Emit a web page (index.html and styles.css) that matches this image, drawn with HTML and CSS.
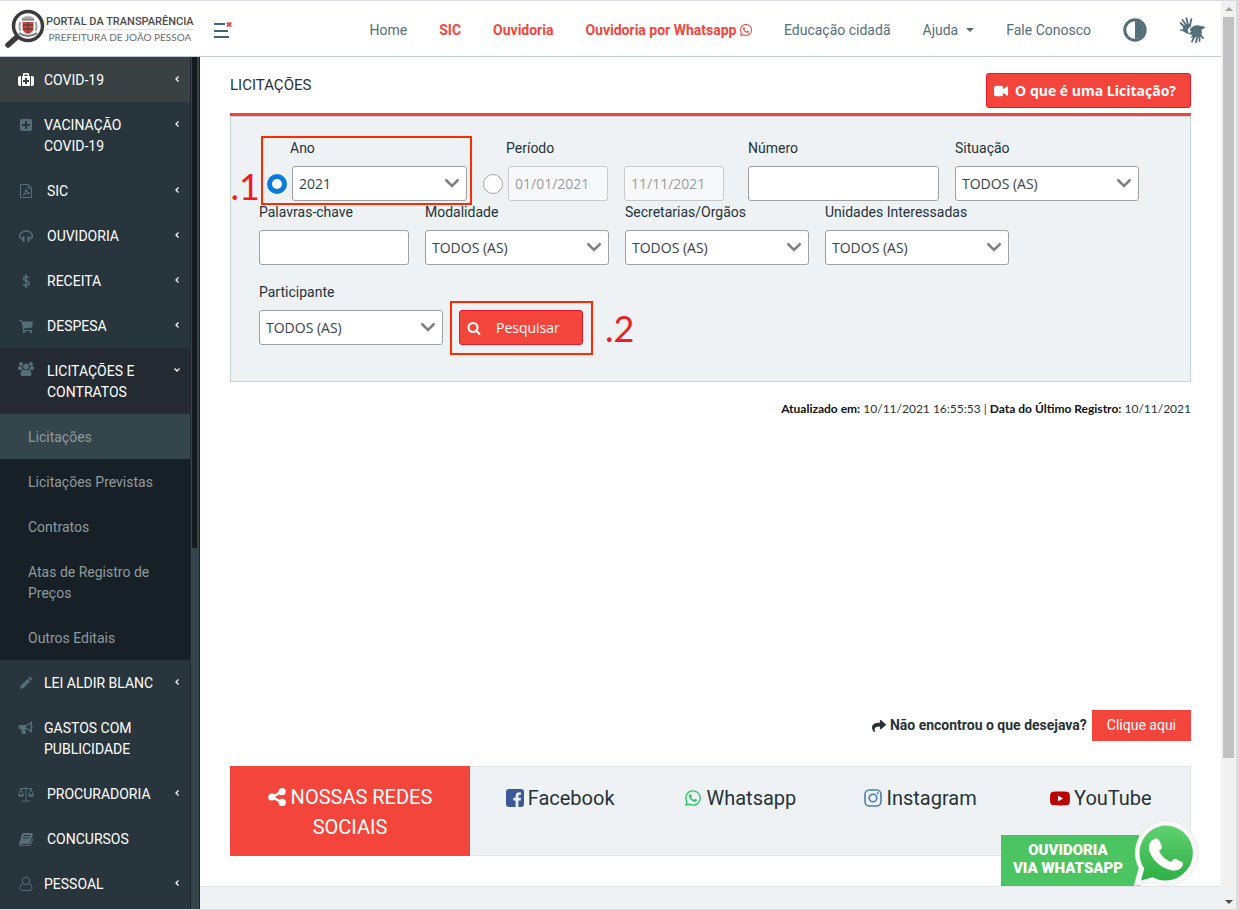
FILE: index.html
```html
<!DOCTYPE html>
<html lang="pt-BR">
<head>
<meta charset="utf-8">
<meta name="viewport" content="width=device-width, initial-scale=1">
<title>Portal da Transparência - Licitações</title>
<link rel="stylesheet" href="styles.css">
</head>
<body>
<svg class="sprite" aria-hidden="true">
  <symbol id="whatsapp" viewBox="0 0 448 512"><path d="M380.9 97.1C339 55.1 283.2 32 223.9 32c-122.4 0-222 99.6-222 222 0 39.1 10.2 77.3 29.6 111L0 480l117.7-30.9c32.4 17.7 68.9 27 106.1 27h.1c122.3 0 224.1-99.6 224.1-222 0-59.3-25.2-115-67.1-157zm-157 341.6c-33.2 0-65.7-8.9-94-25.7l-6.7-4-69.8 18.3L72 359.2l-4.4-7c-18.5-29.4-28.2-63.3-28.2-98.2 0-101.7 82.8-184.5 184.6-184.5 49.3 0 95.6 19.2 130.4 54.1 34.8 34.9 56.2 81.2 56.1 130.5 0 101.8-84.9 184.6-186.6 184.6zm101.2-138.2c-5.5-2.8-32.8-16.2-37.9-18-5.1-1.9-8.8-2.8-12.5 2.8-3.7 5.6-14.3 18-17.6 21.8-3.2 3.7-6.5 4.2-12 1.4-32.6-16.3-54-29.1-75.5-66-5.7-9.8 5.7-9.1 16.3-30.3 1.8-3.7.9-6.9-.5-9.7-1.4-2.8-12.5-30.1-17.1-41.2-4.5-10.8-9.1-9.3-12.5-9.5-3.2-.2-6.9-.2-10.6-.2-3.7 0-9.7 1.4-14.8 6.9-5.1 5.6-19.4 19-19.4 46.3 0 27.3 19.9 53.7 22.6 57.4 2.8 3.7 39.1 59.7 94.8 83.8 35.2 15.2 49 16.5 66.6 13.9 10.7-1.6 32.8-13.4 37.4-26.4 4.6-13 4.6-24.1 3.2-26.4-1.3-2.5-5-3.9-10.5-6.6z"/></symbol>
  <symbol id="chevron" viewBox="0 0 16 10"><path d="M1.500 1.500 8 8l6.500-6.500" fill="none" stroke="currentColor" stroke-width="2.500"/></symbol>
  <symbol id="arrow-left" viewBox="0 0 6 8"><path d="M4.500 1.500 2 4l2.500 2.500" fill="none" stroke="currentColor" stroke-width="1.300"/></symbol>
</svg>

<div class="app">
  <header class="topbar">
    <a class="brand" href="#">
      <svg class="brand-mark" viewBox="0 0 42 42" aria-hidden="true">
        <path d="M13 28 4 36" stroke="#3b3b3d" stroke-width="5.500" stroke-linecap="round"/>
        <circle cx="24" cy="17" r="14.500" fill="#fff" stroke="#3b3b3d" stroke-width="3.500"/>
        <path d="M18 11V8l2 1 1-2h1l1 1 1-2 1 2 1-1h1l1 2 2-1v3z" fill="#a5a5a7"/>
        <path d="M18 11h12" stroke="#777" stroke-width="1.200"/>
        <path d="M18.500 13h11v7q-1 4-5.500 5-4.500-1-5.500-5z" fill="#d9403b"/>
        <path d="M24 13v11M19 16h10M19 20h10" stroke="#4a4a4a" stroke-width="1.300"/>
        <path d="M16.500 13q-2 4 0 9M31.500 13q2 4 0 9" fill="none" stroke="#999" stroke-width="1.800"/>
        <path d="M15 24q4 3 9 3t9-3" fill="none" stroke="#777" stroke-width="2"/>
      </svg>
      <span class="brand-text"><strong>PORTAL DA TRANSPARÊNCIA</strong><span>PREFEITURA DE JOÃO PESSOA</span></span>
    </a>
    <button class="menu-toggle" aria-label="Fechar menu">
      <svg viewBox="0 0 20 18"><path d="M1 3h11M1 10h14M1 16h15" stroke="#456472" stroke-width="2"/><path d="m14 1.500 4 4m0-4-4 4" stroke="#f4453c" stroke-width="2"/></svg>
    </button>
    <nav class="topnav">
      <a href="#">Home</a>
      <a class="hot" href="#">SIC</a>
      <a class="hot" href="#">Ouvidoria</a>
      <a class="hot" href="#">Ouvidoria por Whatsapp <svg class="i-inline"><use href="#whatsapp"/></svg></a>
      <a href="#">Educação cidadã</a>
      <a class="caret" href="#">Ajuda</a>
      <a href="#">Fale Conosco</a>
      <button class="icon-button" aria-label="Contraste"><svg viewBox="0 0 24 24"><circle cx="12" cy="12" r="10.200" fill="none" stroke="currentColor" stroke-width="3"/><path d="M12 3a9 9 0 0 1 0 18z"/></svg></button>
      <button class="icon-button" aria-label="Libras"><svg viewBox="0 0 26 26"><g fill="none" stroke="currentColor" stroke-linecap="round" stroke-width="1.800"><path d="M1.500 6 5 9.500M3.500 3 7 8M7.500 1.200 9 8M12.500 2 11 8M2 13l4 1"/><path d="M25 10.500 21 10M13 24.500l3-6M17 25.200l1.500-6M20.500 24l0-5M24 21l-3-3.500"/></g><path d="M4 9q3-2.500 7.500-2L12.500 9 10 11q-2 1-1 3l1 3Q5 16 4 13z"/><path d="M12.500 10.500q4-3.500 9-1.500l3.500 2-2.500 2q1 4-1 6.500l-6 .5-4 1 2-3.500q-3 1-3.500-1l3-3-2 .5q-1-1.500 1.500-3.500z"/></svg></button>
    </nav>
  </header>

  <aside class="sidebar">
    <ul class="menu">
      <li><a class="item lit" href="#"><svg viewBox="0 0 16 16"><path fill-rule="evenodd" d="M5 4V2q0-1 1-1h4q1 0 1 1v2h1v10H4V4zm1.500 0h3V2.500h-3zM7 6v2H5v2h2v2h2v-2h2V8H9V6zM3 4v10H2q-2 0-2-2V6q0-2 2-2zm10 0v10h1q2 0 2-2V6q0-2-2-2z"/></svg><span>COVID-19</span><svg class="more"><use href="#arrow-left"/></svg></a></li>
      <li><a class="item" href="#"><svg viewBox="0 0 16 16"><path fill-rule="evenodd" d="M4 2h8q2 0 2 2v8q0 2-2 2H4q-2 0-2-2V4q0-2 2-2zm3 2v3H4v2h3v3h2V9h3V7H9V4z"/></svg><span>VACINAÇÃO COVID-19</span><svg class="more"><use href="#arrow-left"/></svg></a></li>
      <li><a class="item wide" href="#"><svg viewBox="0 0 16 16"><path d="M2.500 1.500h8l3 3v10h-11zM10 1.500V5h3.500M5 12q3-2 3-6 0 4 4 4-4 0-7 2" fill="none" stroke="currentColor"/></svg><span>SIC</span><svg class="more"><use href="#arrow-left"/></svg></a></li>
      <li><a class="item wide" href="#"><svg viewBox="0 0 16 16"><path d="M3 11Q1 9 2 6.500 4 3 8 3t6 3.500Q15 9 13 11" fill="none" stroke="currentColor" stroke-width="1.500"/><path d="M3.500 9 6.500 8v6l-2-.5zm9 0L9.500 8v6l2-.5z"/></svg><span>OUVIDORIA</span><svg class="more"><use href="#arrow-left"/></svg></a></li>
      <li><a class="item wide" href="#"><svg viewBox="0 0 16 16"><path d="M11 5Q10 3.500 8 3.500 5.500 3.500 5.500 5.500 5.500 7 8 7.800q3 .7 3 2.700 0 2-3 2-2 0-3-1.500M8 1v14" fill="none" stroke="currentColor" stroke-width="1.500"/></svg><span>RECEITA</span><svg class="more"><use href="#arrow-left"/></svg></a></li>
      <li><a class="item wide" href="#"><svg viewBox="0 0 16 16"><path d="M1 2h3l.5 1.500H15l-1 6-8 1V12h8v1H5V10L3.300 3H1z"/><circle cx="6" cy="14" r="1.200"/><circle cx="13" cy="14" r="1.200"/></svg><span>DESPESA</span><svg class="more"><use href="#arrow-left"/></svg></a></li>
      <li>
        <a class="item wide open" href="#"><svg viewBox="0 0 16 16"><circle cx="3" cy="3" r="2"/><circle cx="13" cy="3" r="2"/><circle cx="8" cy="5.500" r="3"/><path d="M0 8q0-3 2-3l2 1q0 2 1 3H1zM16 8q0-3-2-3l-2 1q0 2-1 3h4zM2.500 14q0-5 3-5.500 2.500 1.500 5 0 3 .5 3 5.500-.5 1-2 1h-7q-1.500 0-2-1z"/></svg><span>LICITAÇÕES E CONTRATOS</span><svg class="more down"><use href="#arrow-left"/></svg></a>
        <ul class="submenu">
          <li><a class="current" href="#">Licitações</a></li>
          <li><a href="#">Licitações Previstas</a></li>
          <li><a href="#">Contratos</a></li>
          <li><a href="#">Atas de Registro de Preços</a></li>
          <li><a href="#">Outros Editais</a></li>
        </ul>
      </li>
      <li><a class="item" href="#"><svg viewBox="0 0 16 16"><path d="m2 14 .8-3.500L9.500 4 12 6.500 5.500 13zM10.200 3.200 12 1.500l2.500 2.500-1.800 1.800z"/></svg><span>LEI ALDIR BLANC</span><svg class="more"><use href="#arrow-left"/></svg></a></li>
      <li><a class="item" href="#"><svg viewBox="0 0 16 16"><path fill-rule="evenodd" d="M1 5h6q4-1 7-4v5q2 1 0 2v5q-3-3-7-4l1 4-1 1H4L3 9H1Q0 7 1 5zm7 1v2q2.500.5 4.500 2V3.500Q10.500 5.500 8 6z"/></svg><span>GASTOS COM PUBLICIDADE</span></a></li>
      <li><a class="item wide" href="#"><svg viewBox="0 0 16 16"><path d="M8 1v13M2 2.500h12M4 15h8M3 3 .5 9h5zM13 3l-2.500 6h5z" fill="none" stroke="currentColor"/><path d="M0 9h6q-1 2-3 2T0 9zm10 0h6q-1 2-3 2t-3-2z"/></svg><span>PROCURADORIA</span><svg class="more"><use href="#arrow-left"/></svg></a></li>
      <li><a class="item wide" href="#"><svg viewBox="0 0 16 16"><path fill-rule="evenodd" d="M5 2h9q1 0 .5 2L12 12q-.5 1-1.500 1H3v1h9l2.500-7q1 0 .5 2l-2 5q-.5 1-1.500 1H3q-2 0-2-2L4 3q.3-1 1-1zm1 2-.3 1H12l.3-1zm-.8 2.500-.3 1h6.300l.3-1z"/></svg><span>CONCURSOS</span></a></li>
      <li><a class="item" href="#"><svg viewBox="0 0 16 16"><path d="M5 7.500Q2 8 2 12.500q.5 2 2.500 2h7q2 0 2.500-2Q14 8 11 7.500" fill="none" stroke="currentColor"/><circle cx="8" cy="5" r="3.700" fill="none" stroke="currentColor"/></svg><span>PESSOAL</span><svg class="more"><use href="#arrow-left"/></svg></a></li>
    </ul>
    <div class="side-scroll"><div class="side-thumb"></div></div>
  </aside>

  <main class="content">
    <div class="page">
      <div class="title-row">
        <h1>LICITAÇÕES</h1>
        <button class="btn help"><svg viewBox="0 0 16 14"><path d="M2.500 1H8q2.500 0 2.500 2.500V5L15 1.500q1 0 1 1v9q0 1-1 1L10.500 9v1.500Q10.500 13 8 13H2.500Q0 13 0 10.500v-7Q0 1 2.500 1z"/></svg>O que é uma Licitação?</button>
      </div>

      <form class="panel">
        <div class="row">
          <div class="choice marked mark-year">
            <label class="shift" for="ano">Ano</label>
            <div class="line">
              <input type="radio" name="filtro" aria-label="Filtrar por ano" checked>
              <div class="select w-year"><select id="ano"><option>2021</option></select><svg><use href="#chevron"/></svg></div>
            </div>
            <span class="note note-one">.1</span>
          </div>
          <div class="choice period">
            <label class="shift" for="inicio">Período</label>
            <div class="line">
              <input type="radio" name="filtro" aria-label="Filtrar por período">
              <input class="text w-date" id="inicio" type="text" value="01/01/2021" disabled>
              <input class="text w-date second" type="text" aria-label="Data final" value="11/11/2021" disabled>
            </div>
          </div>
          <div class="field"><label for="numero">Número</label><input class="text w-number" id="numero" type="text"></div>
          <div class="field"><label for="situacao">Situação</label><div class="select"><select id="situacao"><option>TODOS (AS)</option></select><svg><use href="#chevron"/></svg></div></div>
        </div>
        <div class="row">
          <div class="field"><label for="palavras">Palavras-chave</label><input class="text w-words" id="palavras" type="text"></div>
          <div class="field"><label for="modalidade">Modalidade</label><div class="select"><select id="modalidade"><option>TODOS (AS)</option></select><svg><use href="#chevron"/></svg></div></div>
          <div class="field"><label for="orgaos">Secretarias/Orgãos</label><div class="select"><select id="orgaos"><option>TODOS (AS)</option></select><svg><use href="#chevron"/></svg></div></div>
          <div class="field"><label for="unidades">Unidades Interessadas</label><div class="select"><select id="unidades"><option>TODOS (AS)</option></select><svg><use href="#chevron"/></svg></div></div>
        </div>
        <div class="row last">
          <div class="field"><label for="participante">Participante</label><div class="select"><select id="participante"><option>TODOS (AS)</option></select><svg><use href="#chevron"/></svg></div></div>
          <div class="marked mark-search">
            <button class="btn search" type="button"><svg viewBox="0 0 1792 1792"><path d="M1216 832q0-185-131.500-316.500t-316.500-131.500-316.500 131.500-131.500 316.500 131.500 316.500 316.500 131.500 316.500-131.500 131.500-316.500zm512 832q0 52-38 90t-90 38q-54 0-90-38l-343-342q-179 124-399 124-143 0-273.500-55.500t-225-150-150-225-55.500-273.500 55.500-273.500 150-225 225-150 273.500-55.500 273.500 55.500 225 150 150 225 55.500 273.500q0 220-124 399l343 343q37 37 37 90z"/></svg>Pesquisar</button>
            <span class="note note-two">.2</span>
          </div>
        </div>
      </form>

      <p class="updated"><strong>Atualizado em:</strong> 10/11/2021 16:55:53 | <strong>Data do Último Registro:</strong> 10/11/2021</p>

      <div class="ask">
        <svg viewBox="0 0 512 512"><path d="M503.691 189.836L327.687 37.851C312.281 24.546 288 35.347 288 56.015v80.053C127.371 137.907 0 170.100 0 322.326c0 61.441 39.581 122.309 83.333 154.132 13.653 9.931 33.111-2.533 28.077-18.631C66.066 312.814 132.917 274.316 288 272.085V360c0 20.700 24.300 31.453 39.687 18.164l176.004-152c11.071-9.562 11.086-26.753 0-36.328z"/></svg>
        <strong>Não encontrou o que desejava?</strong>
        <a class="ask-link" href="#">Clique aqui</a>
      </div>

      <section class="social">
        <h2><svg viewBox="0 0 18 18"><g><circle cx="3.800" cy="9" r="3.600"/><circle cx="14.200" cy="3.600" r="3.600"/><circle cx="14.200" cy="14.400" r="3.600"/></g><path d="m14 3.600-10 5.400 10 5.400" fill="none" stroke="currentColor" stroke-width="2.400"/></svg> NOSSAS REDES SOCIAIS</h2>
        <a href="#"><svg class="fb" viewBox="0 0 18 18"><path fill-rule="evenodd" d="M3 0h12q3 0 3 3v12q0 3-3 3h-2.600v-6.500h2.200l.4-2.700h-2.600V7q0-1.200 1.400-1.200H15V3.400Q9.600 2.600 9.600 6.800v2H7.300v2.700h2.300V18H3q-3 0-3-3V3q0-3 3-3z"/></svg>Facebook</a>
        <a href="#"><svg class="wa"><use href="#whatsapp"/></svg>Whatsapp</a>
        <a href="#"><svg class="ig" viewBox="0 0 18 18"><g fill="none" stroke="currentColor" stroke-width="1.600"><rect x="1" y="1" width="16" height="16" rx="4.500"/><circle cx="9" cy="9" r="3.800"/></g><circle cx="13.700" cy="4.300" r="1.100"/></svg>Instagram</a>
        <a href="#"><svg class="yt" viewBox="14 60 548 392"><path d="M549.655 124.083c-6.281-23.650-24.787-42.276-48.284-48.597C458.781 64 288 64 288 64S117.220 64 74.629 75.486c-23.497 6.322-42.003 24.947-48.284 48.597-11.412 42.867-11.412 132.305-11.412 132.305s0 89.438 11.412 132.305c6.281 23.650 24.787 41.500 48.284 47.821C117.220 448 288 448 288 448s170.780 0 213.371-11.486c23.497-6.321 42.003-24.171 48.284-47.821 11.412-42.867 11.412-132.305 11.412-132.305s0-89.438-11.412-132.305zm-317.510 213.508V175.185l142.739 81.205-142.739 81.201z"/></svg>YouTube</a>
      </section>
    </div>
    <footer class="footer"></footer>
    <a class="wa-badge" href="#">
      <span>OUVIDORIA<br>VIA WHATSAPP</span>
      <svg viewBox="0 0 66 66" aria-hidden="true">
        <defs><linearGradient id="green" x1="0" y1="0" x2="0" y2="1"><stop offset="0" stop-color="#61d171"/><stop offset="1" stop-color="#2cb044"/></linearGradient></defs>
        <path d="M33 .5a32.500 32.500 0 1 1-15 61.500L1 66l5-18A32.500 32.500 0 0 1 33 .5z" fill="#fafafa" stroke="#e3e5e6" stroke-width=".8"/>
        <path d="M33 5.500a27.500 27.500 0 1 1-13.500 51.800L8 60.500l3.300-12A27.500 27.500 0 0 1 33 5.500z" fill="url(#green)"/>
        <path d="M21 19q4-2 6 3l2 5q0 2-3 4 4 8 12 11 3-4 5-3l6 3q2 1 0 5-4 5-12 3-16-5-21-20-1-8 5-11z" fill="#fff"/>
      </svg>
    </a>
  </main>

  <div class="page-scroll"><span class="tri up"></span><div class="page-thumb"></div><span class="tri dn"></span></div>
</div>
</body>
</html>
```

FILE: styles.css
```css
* { box-sizing: border-box; }

body {
  margin: 0;
  font: 14px/21px Roboto, "Liberation Sans", sans-serif;
  color: #263238;
  background: #fff;
}

a { color: inherit; text-decoration: none; }
button { font: inherit; cursor: pointer; }
ul { list-style: none; margin: 0; padding: 0; }
svg { fill: currentColor; flex: none; }
.sprite { position: absolute; width: 0; height: 0; }

.app {
  display: grid;
  grid-template: 56px minmax(0, 1fr) / 200px minmax(0, 1fr) 15px;
  height: 100vh;
  overflow: hidden;
  border: 1px solid #dadce0;
  border-width: 1px 3px 1px 0;
}

/* Top bar */
.topbar {
  grid-column: 1 / 3;
  display: flex;
  align-items: center;
  padding-top: 3px;
  border-bottom: 1px solid #bfccd5;
}
.brand { display: flex; align-items: center; width: 200px; padding-left: 4px; }
.brand-mark { width: 42px; height: 42px; }
.brand-text { display: flex; flex-direction: column; align-items: center; padding-bottom: 2px; white-space: nowrap; font: 10px/15px Lato, sans-serif; color: #6b6b6d; }
.brand-text strong { font: 500 11px/15px Roboto, sans-serif; color: #4a4a4c; border-bottom: 1px solid #e2e2e2; }
.menu-toggle { width: 20px; height: 18px; margin-left: 13px; padding: 0; border: 0; background: none; }
.menu-toggle svg { display: block; width: 20px; height: 18px; }
.topnav {
  display: flex;
  align-items: center;
  gap: 32px;
  margin-left: auto;
  padding-right: 16px;
  white-space: nowrap;
  color: #546e7a;
}
.hot { color: #f4453c; font-weight: 700; }
.i-inline { width: 12px; height: 14px; vertical-align: -2px; }
.caret::after {
  content: "";
  display: inline-block;
  margin-left: 8px;
  vertical-align: 3px;
  border: 4px solid transparent;
  border-top-color: currentColor;
  border-bottom: 0;
}
.icon-button { padding: 0; border: 0; background: none; color: #546e7a; }
.icon-button svg { display: block; width: 24px; height: 24px; }
.icon-button:last-child svg { width: 26px; height: 26px; }

/* Sidebar */
.sidebar { display: flex; min-height: 0; overflow: hidden; background: #29353d; }
.menu { flex: 1; color: #fff; }
.item {
  display: flex;
  align-items: flex-start;
  gap: 8px;
  padding: 13px 10px 11px 16px;
}
.item > svg:first-child { width: 16px; height: 16px; margin: 2px 2px 0; color: #546e7a; }
.item.wide { gap: 11px; }
.item span { flex: 1; }
.item.lit { background: #3a4143; }
.item.lit > svg:first-child { color: #fff; }
.item.open { background: #232a31; }
.item.open > svg:first-child { margin-top: 0; }
.item .more { width: 6px; height: 8px; margin-top: 5px; }
.item .down { transform: rotate(-90deg); }
.submenu { background: #162026; color: #929a9e; }
.submenu a { display: block; padding: 13px 28px 11px; }
.submenu .current { background: #34454c; }
.side-scroll { width: 10px; padding: 0 2px 0 1px; background: #34454c; border-left: 1px solid #1e282e; border-right: 1px solid #1e282e; }
.side-thumb { height: 491px; background: #151b1e; }

/* Content */
.content { position: relative; display: flex; flex-direction: column; min-width: 0; }
.page { flex: 1; display: flex; flex-direction: column; padding: 16px 30px 30px; }
.title-row { display: flex; justify-content: space-between; height: 40px; }
.title-row h1 { margin: 0; font-size: 15px; font-weight: 400; line-height: 25px; }
.btn {
  display: flex;
  align-items: center;
  height: 35px;
  border: 1px solid #e6192b;
  border-radius: 3px;
  background: #f4453c;
  color: #fff;
  font-family: "Open Sans", sans-serif;
}
.help { gap: 7px; padding: 0 14px 0 7px; font-weight: 700; }
.help svg { width: 14px; height: 14px; }

.panel {
  padding: 21px 28px 36px;
  background: #eef2f5;
  border: 1px solid #c5d2dc;
  box-shadow: 0 -3px #f4453c;
  margin-top: 3px;
}
.row { display: flex; gap: 16px; margin-bottom: 1px; }
.row.last { align-items: flex-end; margin: 17px 0 0; }
.field label, .choice label { display: block; height: 20px; margin-bottom: 8px; line-height: 20px; white-space: nowrap; }
.choice .shift { padding-left: 23px; }
.line { display: flex; align-items: center; gap: 5px; }
.period { margin-right: 8px; }
.second { margin-left: 11px; }

.text, .select select {
  display: block;
  height: 35px;
  padding: 0 6px;
  border: 1px solid #a0a0a0;
  border-radius: 3px;
  background: #fff;
  color: #37414a;
  font: 14px/20px "Open Sans", sans-serif;
}
.text:disabled { background: #f6f8fa; border-color: #c8cacc; color: #9a9c9e; }
.select { position: relative; width: 184px; }
.select select { width: 100%; appearance: none; }
.select svg { position: absolute; right: 7px; top: 12px; width: 16px; height: 10px; color: #808080; pointer-events: none; }
.select.w-year { width: 175px; }
.w-date { width: 100px; }
.w-number { width: 191px; }
.w-words { width: 150px; }

input[type="radio"] {
  appearance: none;
  width: 20px;
  height: 20px;
  margin: 0;
  border: 1px solid #a8a8a8;
  border-radius: 50%;
  background: #fff;
}
input[type="radio"]:checked { border: 5px solid #0a7bdc; }

.search { width: 124px; gap: 15px; padding: 0 7px; }
.search svg { width: 14px; height: 14px; }

/* Step markers drawn over the form */
.marked { position: relative; }
.mark-year { margin-left: 8px; }
.marked::after { content: ""; position: absolute; border: 2px solid #ff2a00; pointer-events: none; }
.mark-year::after { inset: -2px -5px -4px -6px; }
.mark-search::after { inset: -9px -10px -10px -9px; }
.note { position: absolute; font: 36px/36px Lato, sans-serif; color: #f01c24; }
.note-one { right: 207px; bottom: -3px; }
.note-two { left: 146px; bottom: -1px; }

.updated { margin: 16px 0 0; text-align: right; font: 12px/21px Lato, sans-serif; }
.updated strong { color: #111; }

.ask { display: flex; align-items: center; justify-content: flex-end; gap: 4px; margin-top: auto; }
.ask svg { width: 14px; height: 14px; }
.ask-link { margin-left: 1px; padding: 5px 15px; background: #f4453c; color: #fff; }

.social {
  display: grid;
  grid-template-columns: 240px repeat(4, minmax(0, 1fr));
  margin-top: 25px;
  background: #eef2f5;
  box-shadow: inset 0 0 0 1px #e2e5e8;
  font-size: 20px;
  line-height: 30px;
  text-align: center;
}
.social h2 { margin: 0; padding: 16px 24px 14px; background: #f4453c; color: #fff; font-size: 20px; font-weight: 400; }
.social h2 svg { width: 18px; height: 18px; vertical-align: -2px; }
.social a { display: flex; align-items: center; justify-content: center; gap: 4px; height: 30px; margin-top: 17px; }
.social a svg { width: 18px; height: 18px; }
.social a .yt { width: 20px; height: 15px; }
.fb { color: #3b5998; }
.wa { color: #25c760; }
.ig { color: #4c7fa8; }
.yt { color: #bb0000; }

.footer { height: 23px; background: #eef2f5; border-top: 1px solid #e2e5e8; }

.wa-badge { position: absolute; right: 22px; bottom: 23px; display: flex; align-items: flex-end; }
.wa-badge span {
  width: 138px;
  height: 51px;
  padding: 6px 14px 0 10px;
  background: #4bc561;
  color: #fff;
  font: 900 15px/18px Roboto, sans-serif;
  text-align: center;
  white-space: nowrap;
}
.wa-badge svg { width: 66px; height: 66px; margin-left: -6px; }

/* Window scroll bar */
.page-scroll {
  grid-area: 1 / 3 / 3 / 4;
  display: flex;
  flex-direction: column;
  align-items: center;
  background: #f1f1f1;
}
.page-thumb { width: 11px; height: 741px; margin: 6px 0 auto; background: #c1c1c1; }
.tri { border: 4px solid transparent; }
.up { margin-top: 6px; border-top: 0; border-bottom-color: #a3a3a3; }
.dn { margin-bottom: 5px; border-bottom: 0; border-top-color: #505050; }
```
